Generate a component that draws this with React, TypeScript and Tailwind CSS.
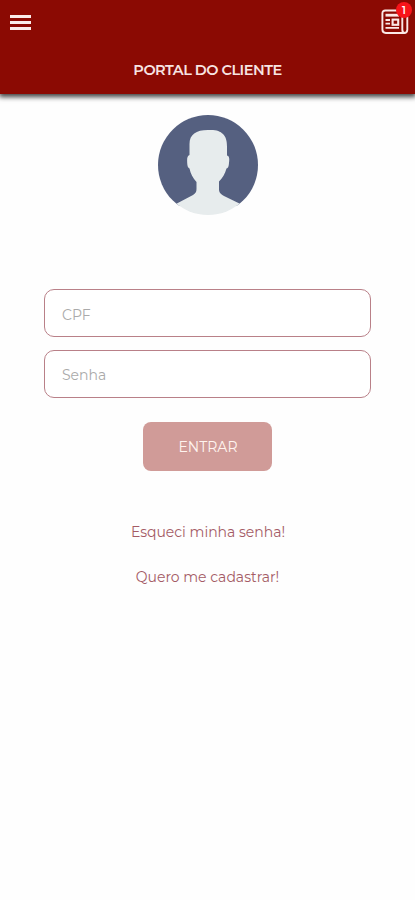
import React from "react";

function NewsIcon() {
  return (
    <svg width="28" height="26" viewBox="0 0 28 26" fill="none" stroke="#fbe9e7" strokeWidth="1.900">
      <path d="M21.500 1.500H4.200C2.500 1.500 1.400 2.600 1.400 4.200V20.600C1.400 22.700 2.700 24 4.800 24H23.200C25.200 24 26.300 22.700 26.300 20.800V7.500" />
      <path d="M21.300 1.500V20.600C21.300 22.600 22.200 24 23.700 24" />
      <path d="M4.500 6.200H18" strokeWidth="2.800" />
      <path d="M4.500 11H9M4.500 14.600H9M4.500 18.900H18" strokeWidth="1.900" />
      <rect x="11.600" y="10.600" width="5.600" height="5.200" strokeWidth="2.100" />
    </svg>
  );
}

function Avatar() {
  return (
    <svg className="size-[102px] shrink-0" viewBox="0 0 102 102">
      <defs>
        <clipPath id="avatar-circle">
          <circle cx="51" cy="51" r="50" />
        </clipPath>
      </defs>
      <g clipPath="url(#avatar-circle)">
        <rect width="102" height="92" fill="#556080" />
        <path
          fill="#e7eced"
          d="M51 16C59 15.500 63 17 66 20C69 23 70 27 70 33V41.500C72.500 42 72.500 45 72 49C71.800 52.500 71 54 69.500 54.500C68 60 65.500 64 62 67.500V75C62 78.500 63.500 80 67 82L85.500 91V104H17V91L36 81C38.500 79.500 39.500 78 39.500 75V68C36 64 33.500 59.500 32.500 54.500C31 54 30.300 52 30.200 49C30 45 30 42 32.500 41V30C32.500 20.500 39 16 51 16Z"
        />
      </g>
    </svg>
  );
}

export default function App() {
  return (
    <div className="flex h-[900px] w-full flex-col bg-[#fefefe] font-['Montserrat','Inter','Liberation_Sans',sans-serif]">
      <header className="h-[94px] shrink-0 bg-[#8b0a03] shadow-[0_2px_5px_1px_rgba(0,0,0,0.75)]">
        <div className="flex h-[46px] items-start justify-between pl-[10px] pr-[6px]">
          <button aria-label="Menu" className="mt-[15px] flex w-[21px] flex-col gap-[3px]">
            <span className="h-[3px] w-full bg-[#fbecea]" />
            <span className="h-[3px] w-full bg-[#fbecea]" />
            <span className="h-[3px] w-full bg-[#fbecea]" />
          </button>
          <button aria-label="1" className="relative mt-[9px]">
            <NewsIcon />
            <span className="absolute -top-[7px] left-[15px] flex size-[16px] items-center justify-center rounded-full bg-[#f8141a] text-[10px] font-semibold text-white">1</span>
          </button>
        </div>
        <h1 className="flex h-[48px] items-center justify-center whitespace-nowrap pt-[2px] text-[14.500px] font-semibold tracking-[-0.500px] text-[#f7e4e2]">
          PORTAL DO CLIENTE
        </h1>
      </header>

      <main className="flex flex-col items-center pt-[20px]">
        <Avatar />
        <form className="mt-[73px] flex w-[327px] flex-col items-center" onSubmit={(e) => e.preventDefault()}>
          <input placeholder="CPF" className="h-[48px] w-full rounded-[10px] border border-[#b98088] bg-white px-[17px] pt-[3px] text-[14px] text-[#777] outline-none placeholder:text-[#aaa]" />
          <input type="password" placeholder="Senha" className="mt-[13px] h-[48px] w-full rounded-[10px] border border-[#b98088] bg-white px-[17px] pt-[2px] text-[14px] outline-none placeholder:text-[#aaa]" />
          <button className="mt-[24px] flex h-[49px] w-[129px] items-center justify-center rounded-[8px] bg-[#d09b98] pt-px pl-px text-[14px] text-[#fff4ef]">ENTRAR</button>
        </form>
        <a className="mt-[50px] pl-px text-[14px] leading-[22px] text-[#a45b65]">Esqueci minha senha!</a>
        <a className="mt-[23px] text-[14px] leading-[22px] text-[#a45b65]">Quero me cadastrar!</a>
      </main>
    </div>
  );
}
